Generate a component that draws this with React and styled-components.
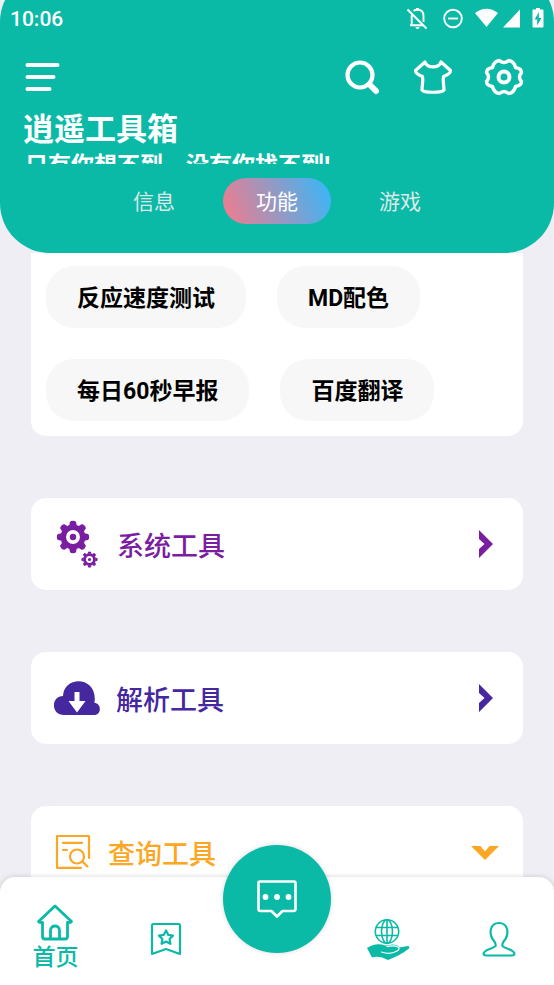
import React from 'react';
import styled, { createGlobalStyle } from 'styled-components';

const TEAL = '#0abaa7';
const PAGE = '#efeef4';

const GlobalStyle = createGlobalStyle`
  * { box-sizing: border-box; }
  body {
    margin: 0;
    background: ${PAGE};
    font-family: Roboto, 'Noto Sans CJK SC', sans-serif;
  }
  button {
    border: 0;
    margin: 0;
    padding: 0;
    background: none;
    color: inherit;
    font: inherit;
    cursor: pointer;
  }
  h1, h2, p { margin: 0; font: inherit; }
  svg { display: block; flex: none; }
`;

const Screen = styled.div`
  display: flex;
  flex-direction: column;
  height: 100vh;
  overflow: hidden;
`;

const Header = styled.header`
  flex: none;
  margin-top: -28px;
  padding: 28px 0 29px;
  border-radius: 50px;
  background: ${TEAL};
  color: #fff;
`;

const StatusBar = styled.div`
  display: flex;
  align-items: center;
  justify-content: space-between;
  height: 38px;
  padding: 0 8px 0 10px;
  font-size: 21px;
  font-weight: 500;
`;

const StatusIcons = styled.div`
  display: flex;
  align-items: center;
`;

const Toolbar = styled.div`
  display: flex;
  align-items: center;
  justify-content: space-between;
  height: 78px;
  padding: 0 30px 0 24px;
`;

const Actions = styled.div`
  display: flex;
  gap: 31px;
`;

const IconButton = styled.button`
  display: flex;
`;

const Title = styled.h1`
  margin-top: -8px;
  padding: 0 23px;
  font-size: 31px;
  font-weight: 700;
  line-height: 44px;
`;

const Slogan = styled.p`
  height: 12px;
  padding: 0 25px;
  overflow: hidden;
  font-size: 23px;
  font-weight: 700;
  line-height: 28px;
  white-space: nowrap;
`;

const Tabs = styled.div`
  display: flex;
  justify-content: center;
  gap: 15px;
  margin-top: 14px;
`;

const Tab = styled.button`
  width: 108px;
  height: 46px;
  padding-bottom: 2px;
  border-radius: 23px;
  background: ${(p) => (p.$active ? 'linear-gradient(70deg, #f57a8b, #34b8fb)' : 'none')};
  color: ${(p) => (p.$active ? '#fff' : '#dfe9e7')};
  font-size: 21px;
`;

const Content = styled.main`
  flex: 1;
  min-height: 0;
  display: flex;
  flex-direction: column;
  gap: 62px;
  padding: 0 31px;
  overflow-y: auto;
  scrollbar-width: none;
`;

const ChipCard = styled.section`
  flex: none;
  display: flex;
  flex-direction: column;
  gap: 31px;
  padding: 13px 15px 15px;
  border-radius: 0 0 15px 15px;
  background: #fff;
`;

const ChipRow = styled.div`
  display: flex;
  gap: 31px;
`;

const Chip = styled.button`
  height: 62px;
  padding: 0 31px 2px;
  border-radius: 28px;
  background: #f7f7f7;
  color: #000;
  font-size: 23px;
  font-weight: 700;
  white-space: nowrap;
`;

const ToolCard = styled.button`
  flex: none;
  display: flex;
  align-items: center;
  gap: 16px;
  height: 92px;
  padding: 0 24px 0 23px;
  border-radius: 15px;
  background: #fff;
  color: ${(p) => p.$color};
  text-align: left;
`;

const ToolName = styled.span`
  flex: 1;
  font-size: 27px;
  font-weight: 500;
`;

const BottomBar = styled.nav`
  position: relative;
  flex: none;
  display: grid;
  grid-template-columns: repeat(5, 1fr);
  align-items: center;
  height: 108px;
  padding-top: 15px;
  border-radius: 15px 15px 0 0;
  background: #fff;
  box-shadow: 0 0 5px rgba(0, 0, 0, 0.18);
  color: ${TEAL};
`;

const NavItem = styled.button`
  display: flex;
  flex-direction: column;
  align-items: center;
  font-size: 23px;
  font-weight: 500;
  line-height: 34px;
`;

const ChatButton = styled.button`
  position: absolute;
  top: -32px;
  left: 50%;
  display: flex;
  align-items: center;
  justify-content: center;
  width: 108px;
  height: 108px;
  margin-left: -54px;
  border-radius: 50%;
  background: ${TEAL};
  box-shadow: 0 0 5px rgba(0, 0, 0, 0.15);
  color: #fff;
`;

const line = {
  fill: 'none',
  stroke: 'currentColor',
  strokeLinecap: 'round',
  strokeLinejoin: 'round',
};

const StatusGlyphs = () => (
  <svg width="140" height="24" viewBox="0 0 140 24" fill="currentColor" aria-hidden="true">
    <g fill="none" stroke="currentColor" strokeWidth="1.900">
      <path d="M1.500 2.500 20.500 21.500" />
      <path d="M7.500 3.800C9 3 10.300 2.800 11.500 2.800c4 0 6 2.700 6 6.200v6M5.700 9v9M4 18.200h13.500M5.700 10c0-1.300.2-2.200.6-3" />
      <path d="M11.500 1v2" strokeWidth="3" />
      <circle cx="47" cy="11.500" r="8.800" />
      <path d="M42 11.500h10" />
    </g>
    <path d="M9.500 20h4a2 2 0 0 1-4 0z" />
    <path d="M69 6Q80.500-2.500 92 6L80.500 20z" />
    <path d="M114 2.500V20.500H97z" />
    <path fillRule="evenodd" d="M127.500 2.500h2.500V1h4v1.500h2.500q1 0 1 1v16q0 1-1 1h-9q-1 0-1-1v-16q0-1 1-1zM133 5l-4.500 7.500h2.700v6L135.500 11h-2.700z" />
  </svg>
);

const MenuIcon = () => (
  <svg width="36" height="30" viewBox="0 0 36 30" {...line} strokeWidth="4" aria-hidden="true">
    <path d="M3.500 3H33.500M3.500 15H29.500M3.500 27H25.500" />
  </svg>
);

const SearchIcon = () => (
  <svg width="40" height="40" viewBox="0 0 40 40" {...line} aria-hidden="true">
    <circle cx="18" cy="18" r="12.500" strokeWidth="4.200" />
    <path d="m27.500 27.500 6.500 6.500" strokeWidth="6" />
  </svg>
);

const ShirtIcon = () => (
  <svg width="40" height="40" viewBox="0 0 40 40" {...line} strokeWidth="3.200" aria-hidden="true">
    <path d="M12 5C14 11.500 26 11.500 28 5L37.500 13.500C37.500 17 34 18 30.500 19.500C29.500 24 31 28 31 33C29 36 11 36 9 33C9 28 10.500 24 9.500 19.500C6 18 2.500 17 2.500 13.500z" />
  </svg>
);

const SettingsIcon = () => (
  <svg width="40" height="40" viewBox="0 0 40 40" {...line} strokeWidth="3.400" aria-hidden="true">
    <path d="M15.500 3.500Q20 7.500 24.500 3.500Q30 4 31.500 10.500Q37.500 11.500 37.500 15.500Q33.500 20 37.500 24.500Q37.500 28.500 31.500 29.500Q30 36 24.500 36.500Q20 32.500 15.500 36.500Q10 36 8.500 29.500Q2.500 28.500 2.500 24.500Q6.500 20 2.500 15.500Q2.500 11.500 8.500 10.500Q10 4 15.500 3.500z" />
    <circle cx="20" cy="20" r="5.500" strokeWidth="4" />
  </svg>
);

const Gear = ({ x, y, scale }) => (
  <g transform={`translate(${x} ${y}) scale(${scale})`}>
    <circle r="9.700" fill="none" stroke="currentColor" strokeWidth="5.500" />
    <circle r="3.200" fill="currentColor" />
    {[0, 45, 90, 135, 180, 225, 270, 315].map((angle) => (
      <path
        key={angle}
        transform={`rotate(${angle})`}
        d="M-3.800-11.500 -3-15Q-2.500-16.200 0-16.200T3-15L3.800-11.500z"
        fill="currentColor"
      />
    ))}
  </g>
);

const GearsIcon = () => (
  <svg width="47" height="48" viewBox="0 0 47 48" aria-hidden="true">
    <Gear x={19} y={17} scale={1} />
    <Gear x={35.500} y={39.500} scale={0.5} />
  </svg>
);

const CloudIcon = () => (
  <svg width="46" height="34" viewBox="0 0 46 34" fill="currentColor" aria-hidden="true">
    <path d="M10 34C-3 34-3.500 15.500 9 15C10-5 41-5 40.800 18C40.800 20 40.500 20.500 40.300 21.700C48 22.500 47.500 34 40 34z" />
    <path fill="#fff" d="M20.500 11h5v9H31.500L23 31.500 14.500 20h6z" />
  </svg>
);

const QueryIcon = () => (
  <svg width="38" height="36" viewBox="0 0 38 36" {...line} strokeWidth="2.200" aria-hidden="true">
    <path d="M35 24V2H3v31.800h24M9 8.800h19M9 16h4" />
    <circle cx="23" cy="22.500" r="7" />
    <path d="m28.500 27.500 5 5" />
  </svg>
);

const Chevron = ({ down }) => (
  <svg width="28" height="30" viewBox="0 0 28 30" fill="currentColor" aria-hidden="true">
    <path d={down ? 'M0 9H9.500L14 14.500 18.500 9H28L14 23z' : 'M8 1 22 15 8 29V20L13.500 15 8 10z'} />
  </svg>
);

const HomeIcon = () => (
  <svg width="38" height="38" viewBox="0 0 38 38" {...line} strokeWidth="2.800" aria-hidden="true">
    <path d="M19 3 2.500 18.500Q3 20 6.500 19.500V33.500Q6.500 36 9 36H29Q31.500 36 31.500 33.500V19.500Q35 20 35.500 18.500zM14.500 35V27.500C14.500 21.500 23.500 21.500 23.500 27.500V35" />
  </svg>
);

const BookmarkIcon = () => (
  <svg width="32" height="34" viewBox="0 0 32 34" {...line} strokeWidth="2.200" aria-hidden="true">
    <path d="M3.500 2h25Q30 2 30 3.500V32Q23 29.500 16 27Q9 29.500 2 32V3.500Q2 2 3.500 2z" />
    <path d="m16 8.500 2.200 4.300 4.800.8-3.400 3.400.8 4.800-4.400-2.200-4.400 2.200.8-4.800L9 13.600l4.800-.8z" />
  </svg>
);

const ChatIcon = () => (
  <svg width="42" height="38" viewBox="0 0 42 38" {...line} strokeWidth="2.600" aria-hidden="true">
    <path d="M4 1.500H38Q39.500 1.500 39.500 3V29Q39.500 31 37.500 31H26.500L21 36.500 15.500 31H4.500Q2.500 31 2.500 29V3Q2.500 1.500 4 1.500z" />
    <g fill="currentColor" stroke="none">
      <circle cx="9.500" cy="17" r="2.900" />
      <circle cx="21" cy="17" r="2.900" />
      <circle cx="32.500" cy="17" r="2.900" />
    </g>
  </svg>
);

const CharityIcon = () => (
  <svg width="44" height="42" viewBox="0 0 44 42" aria-hidden="true">
    <g fill="none" stroke="currentColor" strokeWidth="1.600">
      <circle cx="21" cy="13.500" r="11.700" />
      <path d="M21 2v23M10 9.500h22M10 17.500h22" />
      <ellipse cx="21" cy="13.500" rx="5.500" ry="11.700" />
    </g>
    <path fill="currentColor" d="M1 30Q8 25 16 26.500Q20 28.500 26 26.500Q32 26.500 33.500 29.500L42 28Q44 28.500 43 30.500Q35 37 22 42Q13 37 6 39.500z" />
    <path fill="none" stroke="#fff" strokeWidth="1.200" strokeLinecap="round" d="M21 28.500Q28 27 32 29Q34.500 31 31 33Q24 37 15.500 34" />
  </svg>
);

const PersonIcon = () => (
  <svg width="36" height="36" viewBox="0 0 36 36" {...line} strokeWidth="2.200" aria-hidden="true">
    <path d="M18 2C9 2 8 12 11.500 18C13.500 20.500 15.500 22 14.500 25C12.500 28 2.500 28 2.500 33Q3 34.500 5 34.500H31Q33 34.500 33.500 33C33.500 28 23.500 28 21.500 25C20.500 22 22.500 20.500 24.500 18C28 12 27 2 18 2z" />
  </svg>
);

const tools = [
  { name: '系统工具', color: '#7a1ea1', Icon: GearsIcon },
  { name: '解析工具', color: '#4527a0', Icon: CloudIcon },
  { name: '查询工具', color: '#fca724', Icon: QueryIcon, open: true },
];

const chipRows = [
  ['反应速度测试', 'MD配色'],
  ['每日60秒早报', '百度翻译'],
];

export default function App() {
  return (
    <Screen>
      <GlobalStyle />
      <Header>
        <StatusBar>
          <span>10:06</span>
          <StatusIcons><StatusGlyphs /></StatusIcons>
        </StatusBar>
        <Toolbar>
          <IconButton aria-label="菜单"><MenuIcon /></IconButton>
          <Actions>
            <IconButton aria-label="搜索"><SearchIcon /></IconButton>
            <IconButton aria-label="主题"><ShirtIcon /></IconButton>
            <IconButton aria-label="设置"><SettingsIcon /></IconButton>
          </Actions>
        </Toolbar>
        <Title>逍遥工具箱</Title>
        <Slogan>只有你想不到，没有你找不到!</Slogan>
        <Tabs role="tablist">
          <Tab role="tab" aria-selected="false">信息</Tab>
          <Tab role="tab" aria-selected="true" $active>功能</Tab>
          <Tab role="tab" aria-selected="false">游戏</Tab>
        </Tabs>
      </Header>
      <Content>
        <ChipCard>
          {chipRows.map((row) => (
            <ChipRow key={row[0]}>
              {row.map((label) => <Chip key={label}>{label}</Chip>)}
            </ChipRow>
          ))}
        </ChipCard>
        {tools.map(({ name, color, Icon, open }) => (
          <ToolCard key={name} $color={color} aria-expanded={Boolean(open)}>
            <Icon />
            <ToolName>{name}</ToolName>
            <Chevron down={open} />
          </ToolCard>
        ))}
      </Content>
      <BottomBar>
        <NavItem aria-current="page"><HomeIcon />首页</NavItem>
        <NavItem aria-label="收藏"><BookmarkIcon /></NavItem>
        <span />
        <NavItem aria-label="公益"><CharityIcon /></NavItem>
        <NavItem aria-label="我的"><PersonIcon /></NavItem>
        <ChatButton aria-label="聊天"><ChatIcon /></ChatButton>
      </BottomBar>
    </Screen>
  );
}
